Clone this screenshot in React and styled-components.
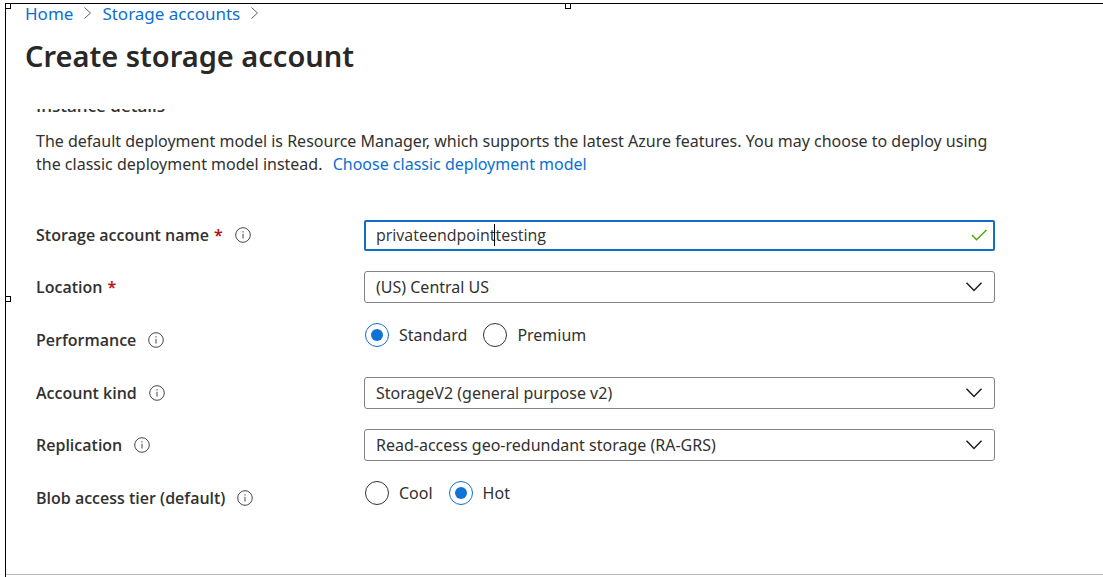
import React from "react";
import styled, { createGlobalStyle } from "styled-components";

const GlobalStyle = createGlobalStyle`
  *, *::before, *::after { box-sizing: border-box; }
  body {
    margin: 0;
    background: #fff;
    color: #323130;
    font: 16px/23px "Noto Sans", "Open Sans", sans-serif;
  }
`;

const Page = styled.div`
  min-height: 100vh;
  padding: 3px 0 0 5px;
  display: flex;
`;

const Frame = styled.div`
  position: relative;
  flex: 1;
  min-width: 0;
  display: flex;
  flex-direction: column;
  border: solid #000;
  border-width: 1px 0 0 1px;
`;

const Handle = styled.span`
  position: absolute;
  left: ${(p) => p.$left || "-1px"};
  top: ${(p) => p.$top || "-1px"};
  width: 6px;
  height: 6px;
  border: 1px solid #000;
  background: #fff;
`;

const Breadcrumb = styled.nav`
  display: flex;
  align-items: center;
  gap: 10px;
  height: 18px;
  padding-left: 19px;
  font-size: 17px;
`;

const Link = styled.a`
  color: #0b6fd3;
  text-decoration: none;
`;

const Title = styled.h1`
  margin: 14px 0 0;
  padding-left: 19px;
  font-size: 29px;
  line-height: 40px;
  font-weight: 600;
  color: #292827;
`;

const Body = styled.main`
  flex: 1;
  margin-top: 33px;
  padding: 0 108px 44px 30px;
  overflow: hidden;
`;

const SectionTitle = styled.h2`
  margin: -15px 0 0;
  font-family: "Open Sans", sans-serif;
  font-size: 17px;
  line-height: 23px;
  font-weight: 600;
`;

const Intro = styled.p`
  margin: 13px 0 43px;
`;

const IntroLink = styled(Link)`
  margin-left: 6px;
`;

const Form = styled.form`
  display: grid;
  gap: 20px;
`;

const Row = styled.div`
  display: grid;
  grid-template-columns: 328px minmax(0, 1fr);
  align-items: center;
  height: ${(p) => (p.$choices ? "34px" : "32px")};
`;

const LabelCell = styled.div`
  display: flex;
  align-items: center;
`;

const Label = styled.label`
  font-family: "Open Sans", sans-serif;
  font-weight: 600;
`;

const Required = styled.span`
  margin-left: 5px;
  font-weight: 600;
  color: #b3131b;
`;

const InfoButton = styled.button`
  display: flex;
  margin-left: 12px;
  padding: 0;
  border: 0;
  background: none;
  color: #484644;
`;

const Field = styled.div`
  position: relative;
  display: flex;
  align-items: center;
`;

const TextInput = styled.input`
  width: 100%;
  height: 31px;
  padding: 0 36px 0 10px;
  border: 2px solid #1070c8;
  border-radius: 2px;
  outline: 0;
  background: #fff;
  color: #323130;
  font: inherit;
  font-family: "Open Sans", sans-serif;
`;

const Caret = styled.span`
  position: absolute;
  left: 130px;
  top: 4px;
  width: 1px;
  height: 22px;
  background: #000;
`;

const Select = styled.select`
  appearance: none;
  width: 100%;
  height: 32px;
  padding: 0 40px 0 11px;
  border: 1px solid #858381;
  border-radius: 3px;
  background: #fff;
  color: #323130;
  font: inherit;
`;

const FieldIcon = styled.svg`
  position: absolute;
  right: ${(p) => p.$right};
  pointer-events: none;
`;

const Choices = styled.div`
  align-self: start;
  display: flex;
  gap: 16px;
  padding-left: 1px;
`;

const Choice = styled.label`
  display: flex;
  align-items: center;
  gap: 10px;
`;

const Radio = styled.input`
  appearance: none;
  display: grid;
  place-items: center;
  width: 24px;
  height: 24px;
  margin: 0;
  border: 1px solid #323130;
  border-radius: 50%;

  &:checked { border-color: #0f6fd0; }
  &:checked::before {
    content: "";
    width: 12px;
    height: 12px;
    border-radius: 50%;
    background: #0f73d6;
  }
`;

const Footer = styled.footer`
  height: 3px;
  border-top: 1px solid #b8b8b8;
`;

const Crumb = () => (
  <svg width="9" height="14" viewBox="0 0 9 14" fill="none" stroke="#605e5c" aria-hidden="true">
    <path d="M1.5 1.5 7.5 7l-6 5.5" />
  </svg>
);

const Info = ({ about }) => (
  <InfoButton type="button" aria-label={`About ${about}`}>
    <svg width="16" height="16" viewBox="0 0 16 16" fill="none" stroke="currentColor">
      <circle cx="8" cy="8" r="7.3" />
      <path d="M8 6.8v4.8M8 4.2v1.3" />
    </svg>
  </InfoButton>
);

const Dropdown = ({ id, value }) => (
  <Field>
    <Select id={id} defaultValue={value}>
      <option>{value}</option>
    </Select>
    <FieldIcon $right="12px" width="18" height="12" viewBox="0 0 18 12" fill="none" stroke="#201f1e" strokeWidth="1.5" aria-hidden="true">
      <path d="m1.5 1.8 7.5 7.7 7.5-7.7" />
    </FieldIcon>
  </Field>
);

const RadioGroup = ({ name, labelledBy, options, selected }) => (
  <Choices role="radiogroup" aria-labelledby={labelledBy}>
    {options.map((option) => (
      <Choice key={option}>
        <Radio type="radio" name={name} defaultChecked={option === selected} />
        {option}
      </Choice>
    ))}
  </Choices>
);

const fields = [
  { id: "location", label: "Location", required: true, value: "(US) Central US" },
  { id: "performance", label: "Performance", info: true, options: ["Standard", "Premium"], value: "Standard" },
  { id: "kind", label: "Account kind", info: true, value: "StorageV2 (general purpose v2)" },
  { id: "replication", label: "Replication", info: true, value: "Read-access geo-redundant storage (RA-GRS)" },
  { id: "tier", label: "Blob access tier (default)", info: true, options: ["Cool", "Hot"], value: "Hot" },
];

export default function App() {
  return (
    <>
      <GlobalStyle />
      <Page>
        <Frame>
          <Breadcrumb aria-label="Breadcrumb">
            <Link href="#home">Home</Link>
            <Crumb />
            <Link href="#accounts">Storage accounts</Link>
            <Crumb />
          </Breadcrumb>
          <Title>Create storage account</Title>
          <Body>
            <SectionTitle>Instance details</SectionTitle>
            <Intro>
              The default deployment model is Resource Manager, which supports the latest Azure features. You may
              choose to deploy using the classic deployment model instead.{" "}
              <IntroLink href="#classic">Choose classic deployment model</IntroLink>
            </Intro>
            <Form>
              <Row>
                <LabelCell>
                  <Label htmlFor="name">Storage account name</Label>
                  <Required>*</Required>
                  <Info about="Storage account name" />
                </LabelCell>
                <Field>
                  <TextInput id="name" type="text" defaultValue="privateendpointtesting" spellCheck={false} />
                  <Caret />
                  <FieldIcon $right="7px" width="17" height="12" viewBox="0 0 17 12" fill="none" stroke="#57a300" strokeWidth="1.5" aria-hidden="true">
                    <path d="m1 6 4.5 4.7L15.5 1" />
                  </FieldIcon>
                </Field>
              </Row>
              {fields.map((f) => (
                <Row key={f.id} $choices={Boolean(f.options)}>
                  <LabelCell>
                    <Label
                      as={f.options ? "span" : "label"}
                      id={`${f.id}-label`}
                      htmlFor={f.options ? undefined : f.id}
                    >
                      {f.label}
                    </Label>
                    {f.required && <Required>*</Required>}
                    {f.info && <Info about={f.label} />}
                  </LabelCell>
                  {f.options ? (
                    <RadioGroup name={f.id} labelledBy={`${f.id}-label`} options={f.options} selected={f.value} />
                  ) : (
                    <Dropdown id={f.id} value={f.value} />
                  )}
                </Row>
              ))}
            </Form>
          </Body>
          <Footer />
          <Handle />
          <Handle $left="51%" />
          <Handle $top="51%" />
        </Frame>
      </Page>
    </>
  );
}
